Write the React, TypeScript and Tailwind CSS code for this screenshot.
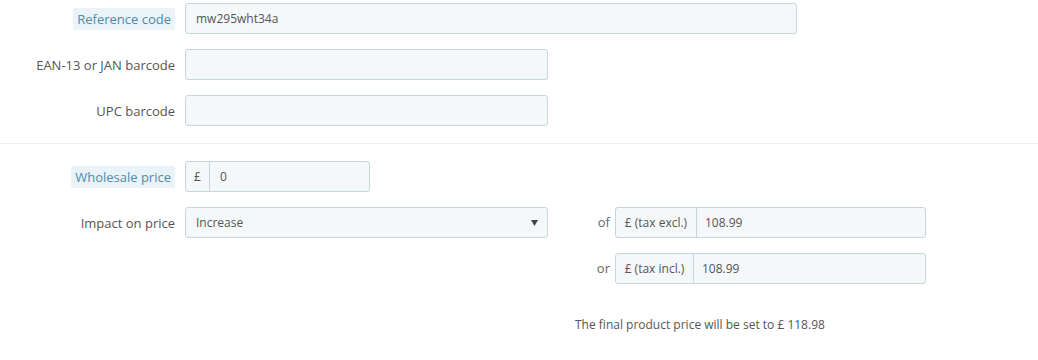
const inputCls =
  "h-[31px] rounded-[3px] border border-[#c7d6db] bg-[#f5f8f9] text-[12px] text-[#555] flex items-center";

function Label({ text, hint = false }: { text: string; hint?: boolean }) {
  return (
    <div className="flex w-[175px] shrink-0 justify-end text-[13px]">
      {hint ? (
        <span className="rounded-[2px] bg-[#eaf3f8] px-[4px] py-[2px] leading-[18px] text-[#4f8cab]">
          {text}
        </span>
      ) : (
        <span className="leading-[18px] text-[#555]">{text}</span>
      )}
    </div>
  );
}

function Addon({ children, width }: { children: React.ReactNode; width: string }) {
  return (
    <div className={`flex h-full shrink-0 items-center justify-center border-r border-[#c7d6db] ${width}`}>
      {children}
    </div>
  );
}

export default function App() {
  return (
    <div
      className="min-h-[360px] w-[1038px] bg-white pt-[3px] text-[12px] text-[#555]"
      style={{ fontFamily: '"Open Sans", "Liberation Sans", sans-serif' }}
    >
      <div className="flex items-center gap-[10px]">
        <Label text="Reference code" hint />
        <div className={`${inputCls} w-[612px] pl-[10px]`}>mw295wht34a</div>
      </div>
      <div className="mt-[15px] flex items-center gap-[10px]">
        <Label text="EAN-13 or JAN barcode" />
        <div className={`${inputCls} w-[363px]`} />
      </div>
      <div className="mt-[15px] flex items-center gap-[10px]">
        <Label text="UPC barcode" />
        <div className={`${inputCls} w-[363px]`} />
      </div>

      <div className="mt-[17px] h-px w-full bg-[#eeeeee]" />

      <div className="mt-[17px] flex items-center gap-[10px]">
        <Label text="Wholesale price" hint />
        <div className={`${inputCls} w-[185px]`}>
          <Addon width="w-[24px]">£</Addon>
          <span className="pl-[10px]">0</span>
        </div>
      </div>

      <div className="mt-[15px] flex items-center">
        <div className="mr-[10px]">
          <Label text="Impact on price" />
        </div>
        <div className={`${inputCls} w-[363px] justify-between px-[10px]`}>
          <span>Increase</span>
          <svg width="7" height="6" viewBox="0 0 7 6" className="mr-[-1px]">
            <path d="M0 0 H7 L3.5 6 Z" fill="#444" />
          </svg>
        </div>
        <div className="flex w-[67px] justify-end pr-[5px] text-[13px] text-[#666]">of</div>
        <div className={`${inputCls} w-[311px]`}>
          <Addon width="w-[81px]">£ (tax excl.)</Addon>
          <span className="pl-[8px]">108.99</span>
        </div>
      </div>

      <div className="mt-[15px] flex items-center pl-[548px]">
        <div className="flex w-[67px] justify-end pr-[5px] text-[13px] text-[#666]">or</div>
        <div className={`${inputCls} w-[311px]`}>
          <Addon width="w-[78px]">£ (tax incl.)</Addon>
          <span className="pl-[8px]">108.99</span>
        </div>
      </div>

      <div className="mt-[32px] pl-[575px] leading-[17px]">
        The final product price will be set to £ 118.98
      </div>
    </div>
  );
}
